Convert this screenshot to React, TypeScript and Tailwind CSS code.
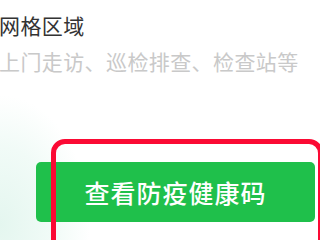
import React from 'react';

export default function App() {
    return (
        <div
            className="relative w-[320px] h-[240px] overflow-hidden bg-white bg-[radial-gradient(ellipse_90px_130px_at_0px_225px,#e4f6ef_0%,#f1fbf7_60%,#ffffff_100%)]"
            style={{ fontFamily: '"Noto Sans CJK SC", "Noto Sans", sans-serif' }}
        >
            <div className="flex flex-col pt-[15px] -ml-px">
                <h2 className="text-[21px] leading-[21px] tracking-[0.4px] text-[#333333]">网格区域</h2>
                <p className="mt-[15px] text-[21px] leading-[21px] tracking-[0.4px] text-[#c9c9c9] whitespace-nowrap">
                    上门走访、巡检排查、检查站等
                </p>
            </div>

            <div className="mt-[90px] ml-[36px] w-[279px] h-[60px] rounded-[5px] bg-[#1fc04b] flex items-center justify-center">
                <span className="text-[25px] leading-none font-medium tracking-[1px] text-white">
                    查看防疫健康码
                </span>
            </div>

            {/* annotation box */}
            <div className="absolute left-[51px] top-[139px] w-[272px] h-[140px] rounded-[14px] border-[5px] border-[#fb0a34] pointer-events-none" />
        </div>
    );
}
